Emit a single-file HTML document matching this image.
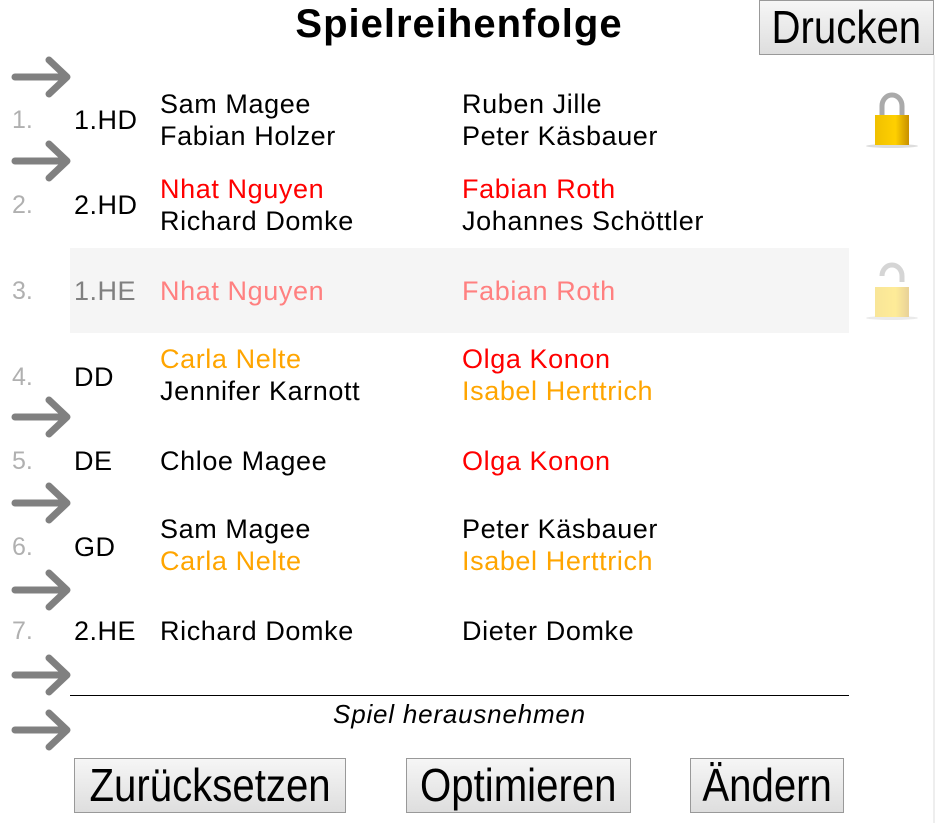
<!DOCTYPE html>
<html><head><meta charset="utf-8"><style>
body{margin:0;width:935px;height:823px;position:relative;background:#fff;font-family:"Liberation Sans",Arial,sans-serif;overflow:hidden}
.a{position:absolute;white-space:nowrap;line-height:1}
.n{font-size:25px;color:#b0b0b0;left:12px}
.t{font-size:27px;letter-spacing:.5px;color:#000;left:74px}
.p{font-size:27px;letter-spacing:.6px;left:160px}
.q{font-size:27px;letter-spacing:.6px;left:462px}
.r{color:#f00}.o{color:#ffa500}
.btn{position:absolute;background:linear-gradient(#f6f6f6,#dedede);border:1px solid #999;box-sizing:border-box;font-size:41px;text-align:center;line-height:52px;color:#000}
.btn span{display:inline-block;transform:scale(.98,1.14)}
</style></head><body>
<div class="a" style="left:0;width:918px;top:4px;text-align:center;font-size:40px;letter-spacing:1px;font-weight:bold">Spielreihenfolge</div>
<div class="btn" style="left:759px;top:0;width:175px;height:55px;font-size:41px"><span>Drucken</span></div>
<div style="position:absolute;left:933px;top:55px;width:2px;height:768px;background:#eee"></div>

<svg style="position:absolute;left:0;top:0" width="80" height="823">
<g stroke="#808080" stroke-width="7" stroke-linecap="round" stroke-linejoin="round" fill="none">
<path d="M15 77H66M49 60L67 77L49 94"/>
<path d="M15 161H66M49 144L67 161L49 178"/>
<path d="M15 417H66M49 400L67 417L49 434"/>
<path d="M15 503H66M49 486L67 503L49 520"/>
<path d="M15 590H66M49 573L67 590L49 607"/>
<path d="M15 675H66M49 658L67 675L49 692"/>
<path d="M15 730H66M49 713L67 730L49 747"/>
</g></svg>

<div style="position:absolute;left:70px;top:248px;width:779px;height:85px;background:#f5f5f5"></div>

<div class="a n" style="top:108px">1.</div><div class="a t" style="top:107px">1.HD</div>
<div class="a p" style="top:91px">Sam Magee</div><div class="a p" style="top:123px">Fabian Holzer</div>
<div class="a q" style="top:91px">Ruben Jille</div><div class="a q" style="top:123px">Peter Käsbauer</div>

<div class="a n" style="top:193px">2.</div><div class="a t" style="top:192px">2.HD</div>
<div class="a p r" style="top:176px">Nhat Nguyen</div><div class="a p" style="top:208px">Richard Domke</div>
<div class="a q r" style="top:176px">Fabian Roth</div><div class="a q" style="top:208px">Johannes Schöttler</div>

<div class="a n" style="top:279px">3.</div><div class="a t" style="top:278px;color:#808080">1.HE</div>
<div class="a p" style="top:278px;color:#ff8080">Nhat Nguyen</div>
<div class="a q" style="top:278px;color:#ff8080">Fabian Roth</div>

<div class="a n" style="top:365px">4.</div><div class="a t" style="top:364px">DD</div>
<div class="a p o" style="top:346px">Carla Nelte</div><div class="a p" style="top:378px">Jennifer Karnott</div>
<div class="a q r" style="top:346px">Olga Konon</div><div class="a q o" style="top:378px">Isabel Herttrich</div>

<div class="a n" style="top:449px">5.</div><div class="a t" style="top:448px">DE</div>
<div class="a p" style="top:448px">Chloe Magee</div><div class="a q r" style="top:448px">Olga Konon</div>

<div class="a n" style="top:535px">6.</div><div class="a t" style="top:534px">GD</div>
<div class="a p" style="top:516px">Sam Magee</div><div class="a p o" style="top:548px">Carla Nelte</div>
<div class="a q" style="top:516px">Peter Käsbauer</div><div class="a q o" style="top:548px">Isabel Herttrich</div>

<div class="a n" style="top:619px">7.</div><div class="a t" style="top:618px">2.HE</div>
<div class="a p" style="top:618px">Richard Domke</div><div class="a q" style="top:618px">Dieter Domke</div>

<svg style="position:absolute;left:862px;top:90px" width="60" height="62">
<defs><linearGradient id="g" x1="0" x2="1"><stop offset="0" stop-color="#f0c000"/><stop offset=".6" stop-color="#ffd000"/><stop offset="1" stop-color="#c89000"/></linearGradient></defs>
<ellipse cx="30" cy="56" rx="26" ry="2" fill="#ddd"/>
<path d="M20 26V16a10 11 0 0 1 20 0V26" stroke="#aaa" stroke-width="5" fill="none"/>
<rect x="13" y="25" width="34" height="30" fill="url(#g)"/>
</svg>
<svg style="position:absolute;left:862px;top:262px" width="60" height="62" opacity=".4">
<ellipse cx="30" cy="56" rx="26" ry="2" fill="#ccc"/>
<path d="M20 14a10 11 0 0 1 20 0V20" stroke="#999" stroke-width="5" fill="none"/>
<rect x="13" y="25" width="34" height="30" fill="url(#g)"/>
</svg>

<div style="position:absolute;left:70px;top:695px;width:779px;height:1px;background:#000"></div>
<div class="a" style="left:70px;width:779px;top:701px;text-align:center;font-size:26px;letter-spacing:.8px;font-style:italic">Spiel herausnehmen</div>

<div class="btn" style="left:74px;top:758px;width:272px;height:55px"><span>Zurücksetzen</span></div>
<div class="btn" style="left:406px;top:758px;width:225px;height:55px"><span>Optimieren</span></div>
<div class="btn" style="left:690px;top:758px;width:154px;height:55px"><span>Ändern</span></div>
</body></html>
